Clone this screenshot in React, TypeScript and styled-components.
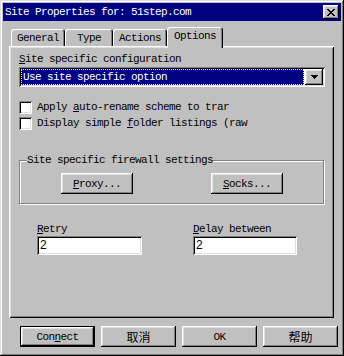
import React from "react";
import styled, { createGlobalStyle, css } from "styled-components";

const GlobalStyle = createGlobalStyle`
  html, body { margin: 0; padding: 0; background: #c0c0c0; }
  * { box-sizing: border-box; }
`;

const mono = css`
  font-family: "Liberation Mono", "Noto Sans CJK SC", monospace;
  font-size: 11px;
  letter-spacing: -0.6px;
  color: #000;
`;

const raised = css`
  background: #c0c0c0;
  box-shadow: inset -1px -1px #000, inset 1px 1px #fff, inset -2px -2px #808080, inset 2px 2px #dfdfdf;
`;

const sunken = css`
  background: #fff;
  box-shadow: inset 1px 1px #808080, inset -1px -1px #fff, inset 2px 2px #000, inset -2px -2px #dfdfdf;
`;

const Window = styled.div`
  width: 344px;
  height: 356px;
  padding: 3px;
  background: #c0c0c0;
  box-shadow: inset -1px -1px #000, inset 1px 1px #dfdfdf, inset -2px -2px #808080, inset 2px 2px #fff;
  display: flex;
  flex-direction: column;
  ${mono};
`;

const TitleBar = styled.div`
  height: 18px;
  background: #000080;
  display: flex;
  align-items: center;
  padding: 0 2px 0 2px;
`;

const TitleText = styled.div`
  flex: 1;
  color: #fff;
  line-height: 18px;
  white-space: nowrap;
`;

const CloseButton = styled.div`
  width: 16px;
  height: 14px;
  ${raised};
  display: flex;
  align-items: center;
  justify-content: center;
`;

const Body = styled.div`
  padding: 6px 0 0 6px;
  display: flex;
  flex-direction: column;
`;

const TabRow = styled.div`
  display: flex;
  align-items: flex-start;
  height: 19px;
  padding-left: 2px;
`;

const Tab = styled.div<{ $active?: boolean; $w: number }>`
  width: ${(p) => p.$w}px;
  height: ${(p) => (p.$active ? 21 : 17)}px;
  margin-top: ${(p) => (p.$active ? 0 : 2)}px;
  background: #c0c0c0;
  border-radius: 3px 3px 0 0;
  box-shadow: inset 1px 1px #fff, inset -1px 0 #000, inset -2px 0 #808080;
  text-align: center;
  line-height: 17px;
  padding-top: 1px;
  white-space: nowrap;
  ${(p) =>
    p.$active &&
    css`
      position: relative;
      z-index: 1;
    `}
`;

const Panel = styled.div`
  width: 325px;
  height: 272px;
  padding: 6px 9px 0 10px;
  background: #c0c0c0;
  box-shadow: inset 1px 1px #fff, inset -1px -1px #000, inset 2px 2px #dfdfdf, inset -2px -2px #808080;
  display: flex;
  flex-direction: column;
`;

const Label = styled.div`
  line-height: 14px;
  height: 14px;
  white-space: nowrap;
`;

const Acc = styled.span`
  text-decoration: underline;
  text-underline-offset: 1px;
`;

const Select = styled.div`
  margin-top: 1px;
  width: 306px;
  height: 20px;
  padding: 2px;
  ${sunken};
  display: flex;
  gap: 1px;
`;

const SelValue = styled.div`
  flex: 1;
  background: #000080;
  color: #fff;
  outline: 1px dotted #ffff80;
  outline-offset: -1px;
  padding-left: 2px;
  line-height: 16px;
  white-space: nowrap;
`;

const SelButton = styled.div`
  width: 18px;
  ${raised};
  display: flex;
  align-items: center;
  justify-content: center;
`;

const CheckList = styled.div`
  margin-top: 14px;
  display: flex;
  flex-direction: column;
  gap: 3px;
`;

const CheckRow = styled.div`
  display: flex;
  align-items: center;
  gap: 5px;
  height: 13px;
`;

const CheckBox = styled.div`
  width: 13px;
  height: 13px;
  ${sunken};
`;

const CheckText = styled.div`
  line-height: 13px;
  white-space: nowrap;
`;

const Group = styled.fieldset`
  margin: 23px 0 0 0;
  padding: 0;
  width: 305px;
  border: 1px solid #808080;
  box-shadow: inset 1px 1px #fff, 1px 1px #fff;
  min-inline-size: 0;
`;

const Legend = styled.legend`
  margin-left: 7px;
  padding: 0;
  line-height: 14px;
  background: #c0c0c0;
`;

const GroupButtons = styled.div`
  display: flex;
  padding-left: 41px;
  gap: 78px;
  margin: 6px 0 9px;
`;

const Button = styled.div<{ $w?: number; $default?: boolean; $cjk?: boolean }>`
  width: ${(p) => p.$w ?? 75}px;
  height: 21px;
  ${raised};
  display: flex;
  align-items: center;
  justify-content: center;
  white-space: nowrap;
  ${(p) =>
    p.$default &&
    css`
      border: 1px solid #000;
    `}
  ${(p) =>
    p.$cjk &&
    css`
      font-family: "Noto Sans CJK SC", sans-serif;
      font-size: 12px;
      letter-spacing: 0;
    `}
`;

const Fields = styled.div`
  margin-top: 18px;
  display: flex;
  padding-left: 18px;
  gap: 51px;
`;

const Field = styled.div`
  display: flex;
  flex-direction: column;
`;

const Input = styled.div<{ $w: number }>`
  width: ${(p) => p.$w}px;
  height: 19px;
  ${sunken};
  padding: 2px 0 0 3px;
  font-family: "Liberation Sans", sans-serif;
  font-size: 12px;
  letter-spacing: 0;
  line-height: 15px;
`;

const Footer = styled.div`
  margin-top: 8px;
  display: flex;
  gap: 6px;
  padding-left: 11px;
`;

const tabs = [
  { label: "General", w: 54 },
  { label: "Type", w: 48 },
  { label: "Actions", w: 54 },
  { label: "Options", w: 56, active: true },
];

export default function App() {
  return (
    <>
      <GlobalStyle />
      <Window>
        <TitleBar>
          <TitleText>Site Properties for: 51step.com</TitleText>
          <CloseButton>
            <svg width="8" height="7" viewBox="0 0 8 7" shapeRendering="crispEdges">
              <path
                d="M0 0h2v1h-2zM6 0h2v1h-2zM1 1h2v1h-2zM5 1h2v1h-2zM2 2h4v1h-4zM3 3h2v1h-2zM2 4h4v1h-4zM1 5h2v1h-2zM5 5h2v1h-2zM0 6h2v1h-2zM6 6h2v1h-2z"
                fill="#000"
              />
            </svg>
          </CloseButton>
        </TitleBar>
        <Body>
          <TabRow>
            {tabs.map((t) => (
              <Tab key={t.label} $w={t.w} $active={t.active}>
                {t.label}
              </Tab>
            ))}
          </TabRow>
          <Panel>
            <Label>
              <Acc>S</Acc>ite specific configuration
            </Label>
            <Select>
              <SelValue>Use site specific option</SelValue>
              <SelButton>
                <svg width="7" height="4" viewBox="0 0 7 4" shapeRendering="crispEdges">
                  <path d="M0 0h7v1h-7zM1 1h5v1h-5zM2 2h3v1h-3zM3 3h1v1h-1z" fill="#000" />
                </svg>
              </SelButton>
            </Select>
            <CheckList>
              <CheckRow>
                <CheckBox />
                <CheckText>
                  Apply <Acc>a</Acc>uto-rename scheme to trar
                </CheckText>
              </CheckRow>
              <CheckRow>
                <CheckBox />
                <CheckText>
                  Display simple <Acc>f</Acc>older listings (raw
                </CheckText>
              </CheckRow>
            </CheckList>
            <Group>
              <Legend>Site specific firewall settings</Legend>
              <GroupButtons>
                <Button $w={72}>
                  <span>
                    <Acc>P</Acc>roxy...
                  </span>
                </Button>
                <Button $w={72}>
                  <span>
                    <Acc>S</Acc>ocks...
                  </span>
                </Button>
              </GroupButtons>
            </Group>
            <Fields>
              <Field>
                <Label>
                  <Acc>R</Acc>etry
                </Label>
                <Input $w={105}>2</Input>
              </Field>
              <Field>
                <Label>
                  <Acc>D</Acc>elay between
                </Label>
                <Input $w={104}>2</Input>
              </Field>
            </Fields>
          </Panel>
          <Footer>
            <Button $default>
              <span>
                Con<Acc>n</Acc>ect
              </span>
            </Button>
            <Button $cjk>取消</Button>
            <Button>OK</Button>
            <Button $cjk>帮助</Button>
          </Footer>
        </Body>
      </Window>
    </>
  );
}
